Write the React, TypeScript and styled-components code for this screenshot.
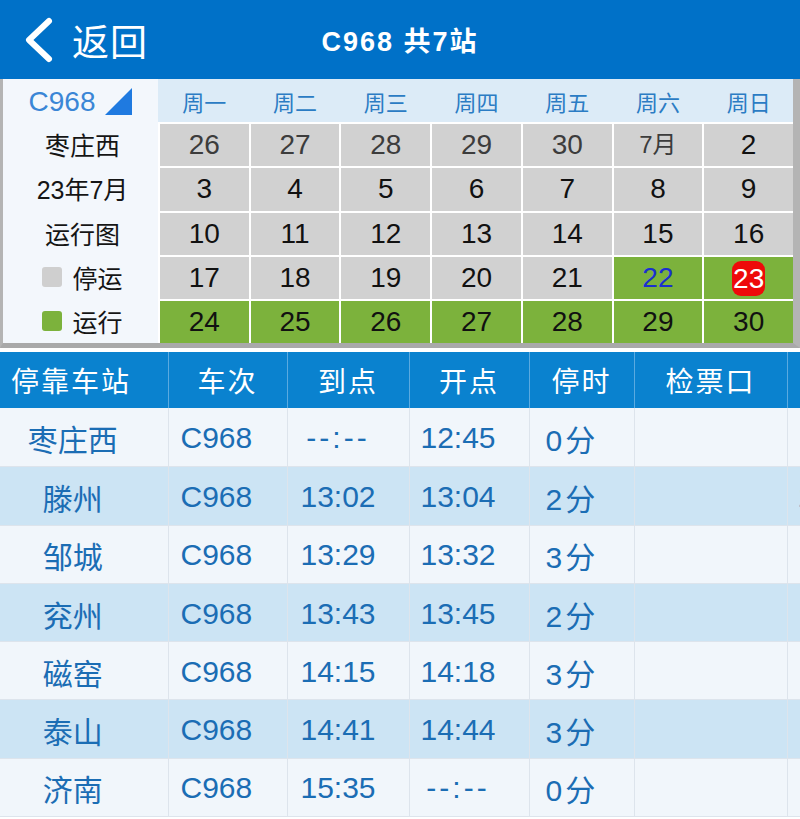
import React from 'react';
import styled, { createGlobalStyle } from 'styled-components';

const GlobalStyle = createGlobalStyle`
  html, body {
    margin: 0;
    padding: 0;
    background: #ffffff;
    overflow: hidden;
  }
  body {
    font-family: "Liberation Sans", "Noto Sans CJK SC", sans-serif;
  }
`;

const Page = styled.div`
  width: 800px;
  height: 819px;
  overflow: hidden;
  background: #ffffff;
`;

const NavBar = styled.div`
  position: relative;
  height: 79px;
  background: #0071c8;
  display: flex;
  align-items: center;
  color: #ffffff;
`;

const BackButton = styled.div`
  display: flex;
  align-items: center;
  padding-left: 22px;
  gap: 16px;
  font-size: 37px;
  letter-spacing: 1px;
`;

const NavTitle = styled.div`
  position: absolute;
  left: 0;
  right: 0;
  text-align: center;
  font-size: 27px;
  font-weight: 700;
  letter-spacing: 2px;
  pointer-events: none;
`;

const CalendarFrame = styled.div`
  border-left: 3px solid #b4b4b4;
  border-right: 7px solid #b4b4b4;
  border-bottom: 5px solid #a9a9a9;
  background: #f3f7fc;
  margin-bottom: 4px;
`;

const CalendarGrid = styled.div`
  display: grid;
  grid-template-columns: 155px repeat(7, 1fr);
  grid-template-rows: 43px repeat(5, 44.3px);
  column-gap: 2px;
  background: #ffffff;
`;

const CornerCell = styled.div`
  background: #f3f7fc;
  display: flex;
  align-items: center;
  justify-content: center;
  gap: 10px;
  color: #3a86d6;
  font-size: 28px;
  padding-top: 2px;
`;

const WeekdayCell = styled.div`
  background: #dcebf7;
  display: flex;
  align-items: center;
  justify-content: center;
  color: #2b7cc4;
  font-size: 22px;
  margin-left: -2px;
  padding-left: 2px;
`;

const SideLabel = styled.div`
  background: #f3f7fc;
  display: flex;
  align-items: center;
  justify-content: center;
  gap: 10px;
  color: #151515;
  font-size: 25px;
  padding-left: 4px;
`;

const Swatch = styled.span<{ $color: string }>`
  display: inline-block;
  width: 20px;
  height: 20px;
  border-radius: 3px;
  background: ${p => p.$color};
`;

const DayCell = styled.div<{ $run: boolean; $dim?: boolean }>`
  background: ${p => (p.$run ? '#7cb23c' : '#d1d1d1')};
  border-top: 2px solid #ffffff;
  display: flex;
  align-items: center;
  justify-content: center;
  font-size: 28px;
  color: ${p => (p.$dim ? '#3c3c3c' : '#111111')};
`;

const MonthMark = styled.span`
  font-size: 24px;
  color: #3c3c3c;
  line-height: 1;
`;

const TodayMark = styled.span`
  color: #1a2fd0;
`;

const RedBadge = styled.span`
  display: inline-flex;
  align-items: center;
  justify-content: center;
  background: #ee0a0a;
  color: #ffffff;
  border-radius: 9px;
  height: 35px;
  padding: 0 1px;
  line-height: 35px;
`;

const Timetable = styled.table`
  border-collapse: collapse;
  table-layout: fixed;
  width: 900px;
`;

const HeadCell = styled.th<{ $w: number; $left?: boolean }>`
  box-sizing: border-box;
  width: ${p => p.$w}px;
  height: 56px;
  background: #0a82cf;
  color: #ffffff;
  font-weight: 400;
  font-size: 28px;
  letter-spacing: 2px;
  text-align: ${p => (p.$left ? 'left' : 'center')};
  padding: 0 0 0 ${p => (p.$left ? 11 : 0)}px;
  border-left: 1px solid #5aaae0;
  &:first-child {
    border-left: none;
  }
`;

const BodyRow = styled.tr<{ $alt: boolean }>`
  background: ${p => (p.$alt ? '#cce4f4' : '#f1f6fb')};
  border-bottom: 1px solid #dde4ec;
`;

const BodyCell = styled.td<{ $align?: 'left' | 'center'; $pl?: number; $pr?: number }>`
  box-sizing: border-box;
  height: 58.3px;
  padding: 2px ${p => p.$pr ?? 0}px 0 ${p => p.$pl ?? 0}px;
  color: #1b6db4;
  font-size: 30px;
  text-align: ${p => p.$align ?? 'center'};
  border-left: 1px solid #dde4ec;
  white-space: nowrap;
  overflow: hidden;
  &:first-child {
    border-left: none;
  }
`;

const NoTime = styled.span`
  letter-spacing: 3px;
`;

const StayUnit = styled.span`
  margin-left: 3px;
`;

type Day = { label: React.ReactNode; run: boolean; dim?: boolean };

const weekdays = ['周一', '周二', '周三', '周四', '周五', '周六', '周日'];

const d = (label: React.ReactNode, run = false, dim = false): Day => ({ label, run, dim });

const weeks: Day[][] = [
  [d('26', false, true), d('27', false, true), d('28', false, true), d('29', false, true), d('30', false, true), d(<MonthMark>7月</MonthMark>), d('2')],
  [d('3'), d('4'), d('5'), d('6'), d('7'), d('8'), d('9')],
  [d('10'), d('11'), d('12'), d('13'), d('14'), d('15'), d('16')],
  [d('17'), d('18'), d('19'), d('20'), d('21'), d(<TodayMark>22</TodayMark>, true), d(<RedBadge>23</RedBadge>, true)],
  [d('24', true), d('25', true), d('26', true), d('27', true), d('28', true), d('29', true), d('30', true)],
];

const sideLabels: React.ReactNode[] = [
  '枣庄西',
  '23年7月',
  '运行图',
  <><Swatch $color="#cfcfcf" />停运</>,
  <><Swatch $color="#7cb23c" />运行</>,
];

const stops = [
  { name: '枣庄西', arrive: '--:--', depart: '12:45', stay: '0' },
  { name: '滕州', arrive: '13:02', depart: '13:04', stay: '2', extra: '1' },
  { name: '邹城', arrive: '13:29', depart: '13:32', stay: '3' },
  { name: '兖州', arrive: '13:43', depart: '13:45', stay: '2' },
  { name: '磁窑', arrive: '14:15', depart: '14:18', stay: '3' },
  { name: '泰山', arrive: '14:41', depart: '14:44', stay: '3' },
  { name: '济南', arrive: '15:35', depart: '--:--', stay: '0' },
];

const columns = [
  { title: '停靠车站', w: 168, left: true },
  { title: '车次', w: 119 },
  { title: '到点', w: 122 },
  { title: '开点', w: 120 },
  { title: '停时', w: 105 },
  { title: '检票口', w: 153 },
  { title: '', w: 113 },
];

const time = (t: string) => (t === '--:--' ? <NoTime>{t}</NoTime> : t);

export default function App() {
  return (
    <Page>
      <GlobalStyle />
      <NavBar>
        <BackButton>
          <svg width="34" height="48" viewBox="0 0 34 48">
            <polyline points="27,5 7,24 27,43" fill="none" stroke="#ffffff" strokeWidth="6" strokeLinecap="round" strokeLinejoin="round" />
          </svg>
          返回
        </BackButton>
        <NavTitle>C968 共7站</NavTitle>
      </NavBar>

      <CalendarFrame>
        <CalendarGrid>
          <CornerCell>
            C968
            <svg width="27" height="27" viewBox="0 0 27 27">
              <polygon points="27,0 27,27 0,27" fill="#1f7ae0" />
            </svg>
          </CornerCell>
          {weekdays.map(w => (
            <WeekdayCell key={w}>{w}</WeekdayCell>
          ))}
          {weeks.map((week, i) => (
            <React.Fragment key={i}>
              <SideLabel>{sideLabels[i]}</SideLabel>
              {week.map((day, j) => (
                <DayCell key={j} $run={day.run} $dim={day.dim}>
                  {day.label}
                </DayCell>
              ))}
            </React.Fragment>
          ))}
        </CalendarGrid>
      </CalendarFrame>

      <Timetable>
        <thead>
          <tr>
            {columns.map((c, i) => (
              <HeadCell key={i} $w={c.w} $left={c.left}>
                {c.title}
              </HeadCell>
            ))}
          </tr>
        </thead>
        <tbody>
          {stops.map((s, i) => (
            <BodyRow key={s.name} $alt={i % 2 === 1}>
              <BodyCell $pr={22}>{s.name}</BodyCell>
              <BodyCell $align="left" $pl={12}>C968</BodyCell>
              <BodyCell $pr={20}>{time(s.arrive)}</BodyCell>
              <BodyCell $pr={22}>{time(s.depart)}</BodyCell>
              <BodyCell $align="left" $pl={16}>
                {s.stay}
                <StayUnit>分</StayUnit>
              </BodyCell>
              <BodyCell />
              <BodyCell $align="left" $pl={10}>{s.extra ?? ''}</BodyCell>
            </BodyRow>
          ))}
        </tbody>
      </Timetable>
    </Page>
  );
}
